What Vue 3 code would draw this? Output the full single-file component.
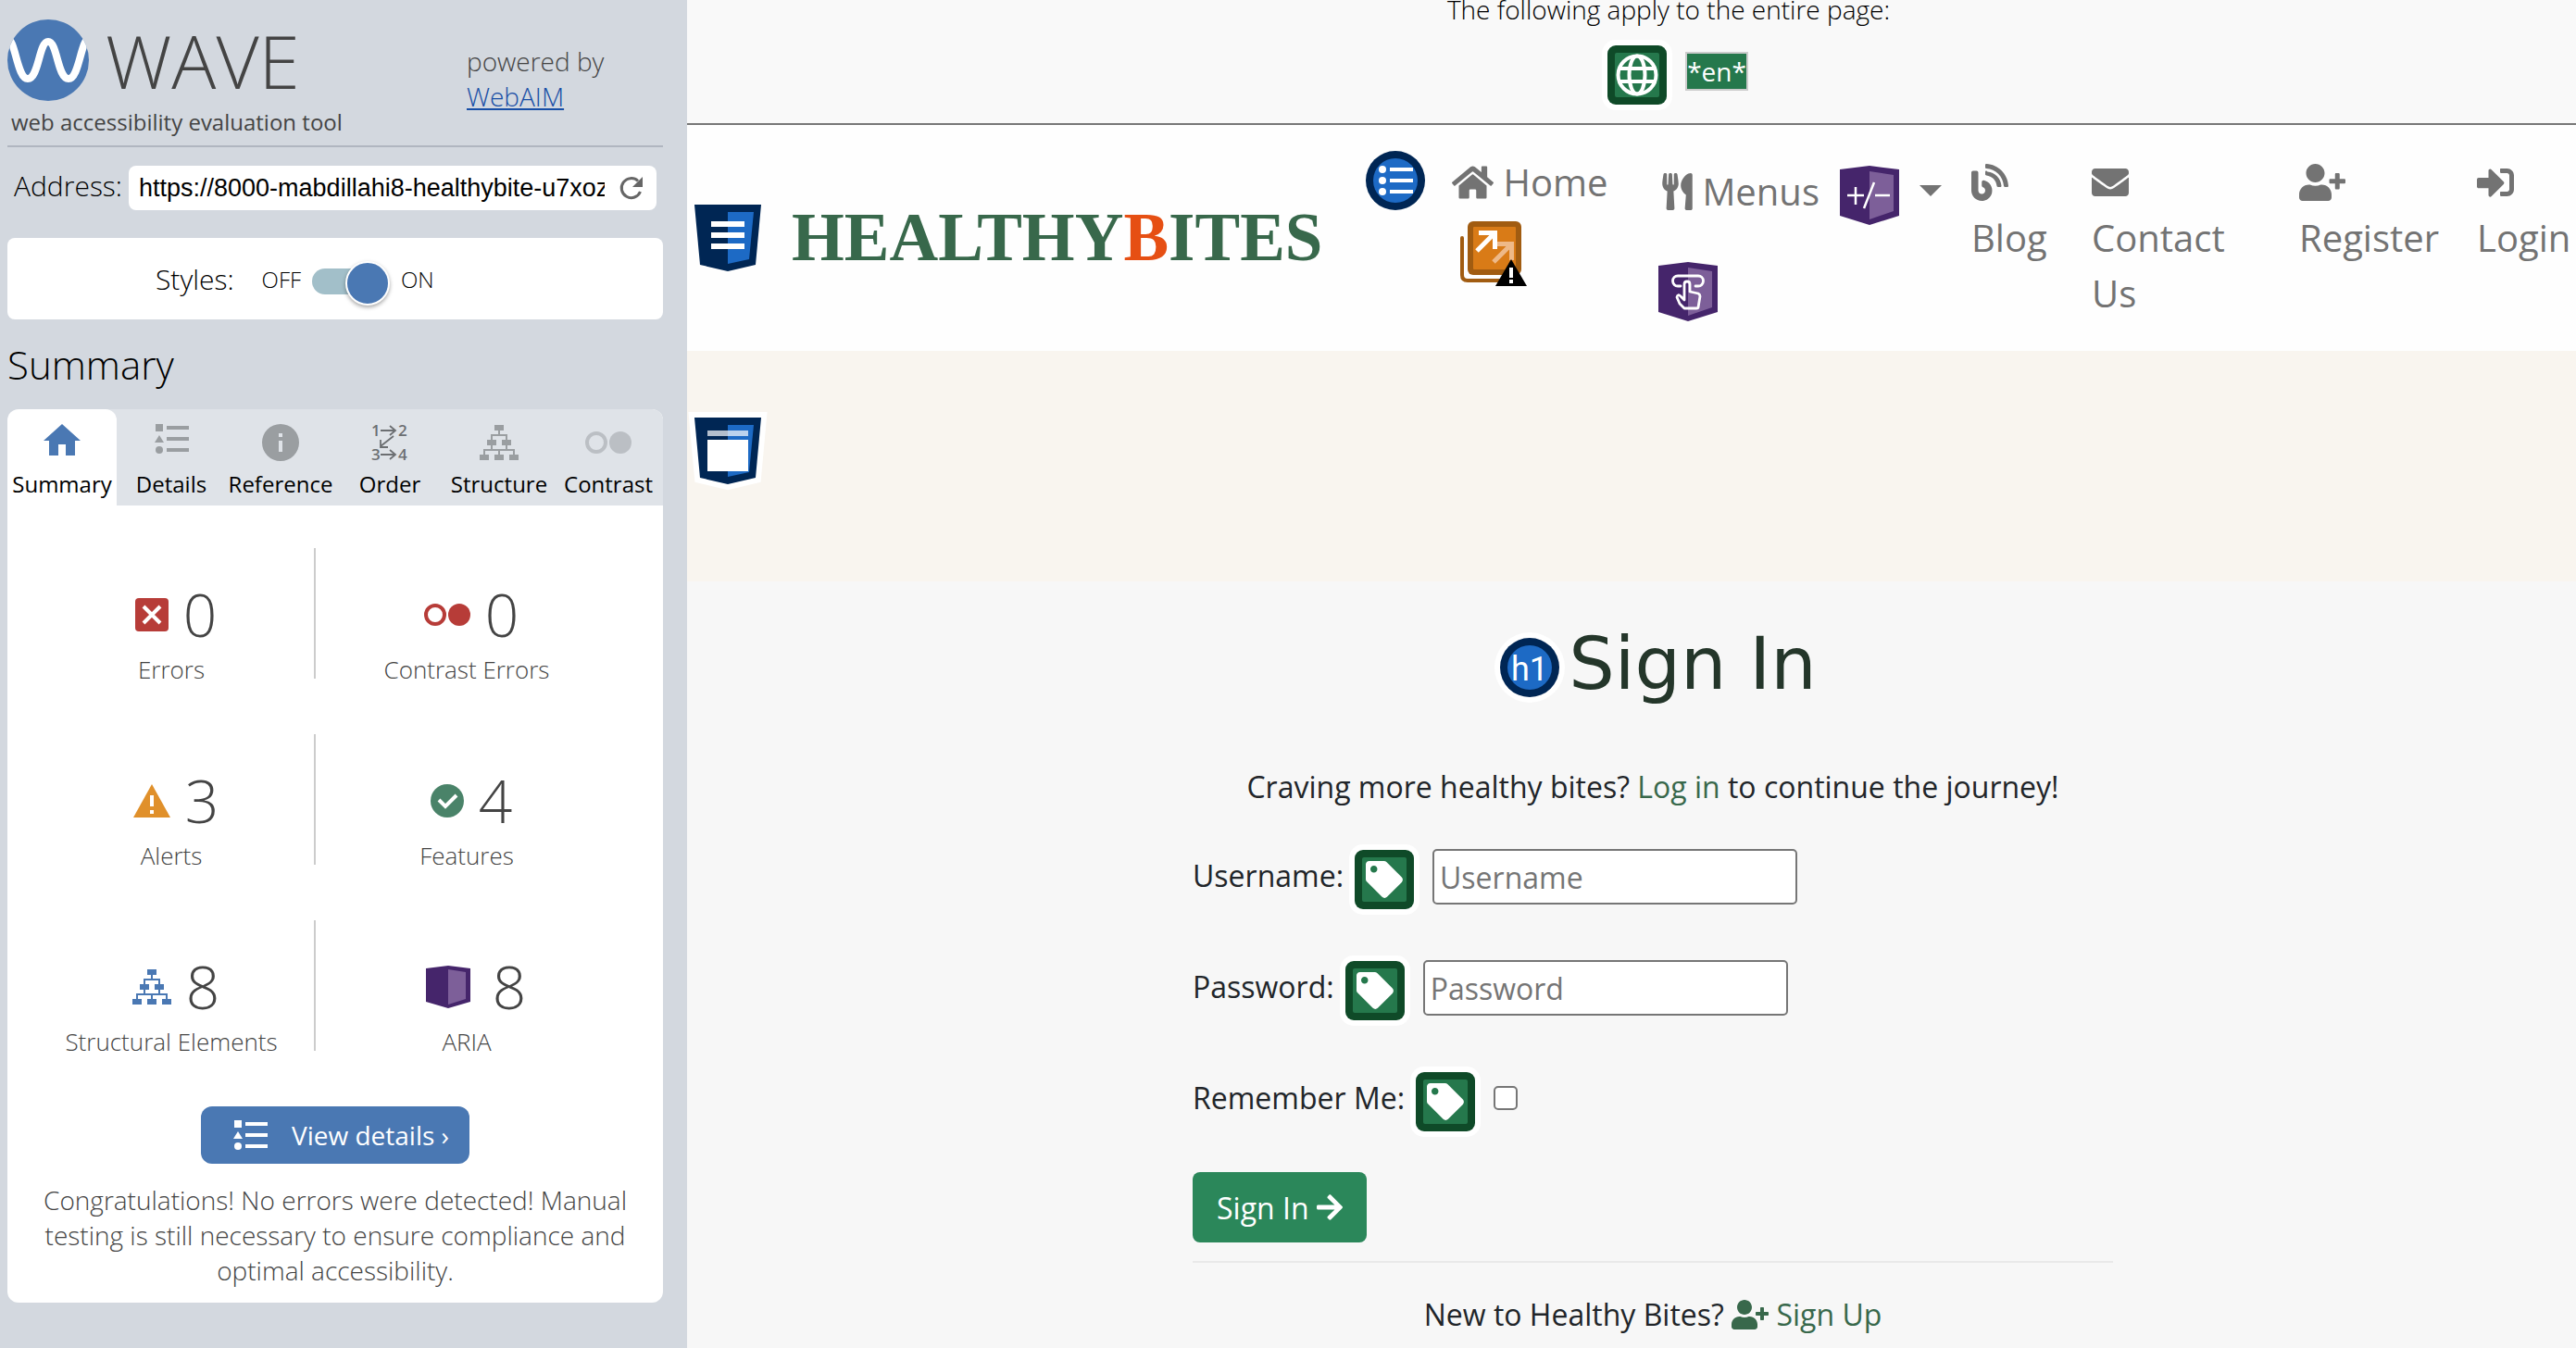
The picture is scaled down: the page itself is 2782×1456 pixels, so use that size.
<script setup>
import { ref } from 'vue'

const address = ref('https://8000-mabdillahi8-healthybite-u7xozu3kq1p.ws-eu110.gitpod.io')
const stylesOn = ref(true)
const username = ref('')
const password = ref('')
const remember = ref(false)

const tabs = [
  { icon: 'home', label: 'Summary' },
  { icon: 'list', label: 'Details' },
  { icon: 'info', label: 'Reference' },
  { icon: 'order', label: 'Order' },
  { icon: 'tree', label: 'Structure' },
  { icon: 'contrast', label: 'Contrast' },
]
const active = ref('Summary')

const statRows = [
  [
    { icon: 'error', w: 36, h: 36, count: 0, label: 'Errors', tone: 'red' },
    { icon: 'contrast', w: 50, h: 24, count: 0, label: 'Contrast Errors', tone: 'red' },
  ],
  [
    { icon: 'alert', w: 40, h: 36, count: 3, label: 'Alerts', tone: 'orange' },
    { icon: 'feature', w: 36, h: 36, count: 4, label: 'Features', tone: 'green' },
  ],
  [
    { icon: 'tree', w: 42, h: 38, count: 8, label: 'Structural Elements', tone: 'blue' },
    { icon: 'aria', w: 48, h: 46, count: 8, label: 'ARIA', tone: 'purple' },
  ],
]
</script>

<template>
  <svg class="sprite" aria-hidden="true">
    <defs>
      <symbol id="home" viewBox="0 0 40 40"><path d="M20 0 0 18h6v16h10V22h8v12h10V18h6z" /></symbol>
      <symbol id="list" viewBox="0 0 37 32">
        <path d="M1 0h8v8H1zM5 12l5 8H0zM13 2h24v4H13zM13 14h24v4H13zM13 26h24v4H13z" />
        <circle cx="5" cy="28" r="4" />
      </symbol>
      <symbol id="info" viewBox="0 0 40 40">
        <path fill-rule="evenodd" d="M20 0a20 20 0 1 1 0 40 20 20 0 0 1 0-40zM18 10v4h4v-4zM18 18v12h4V18z" />
      </symbol>
      <symbol id="order" viewBox="0 0 38 40">
        <g fill="none" stroke="#6c6f72" stroke-width="1.8">
          <path d="M9 7h15M19 2l6 5-6 5M9 33h15M19 28l6 5-6 5M23 13 9 24M9 17v8h8" />
        </g>
        <g font-family="'Open Sans', sans-serif" font-size="17" font-weight="600" fill="#6c6f72">
          <text x="-1" y="13">1</text><text x="28" y="13">2</text>
          <text x="-1" y="39">3</text><text x="28" y="39">4</text>
        </g>
      </symbol>
      <symbol id="tree" viewBox="0 0 42 38">
        <path d="M16 0h10v6H16zM8 16h10v6H8zM24 16h10v6H24zM0 32h10v6H0zM16 32h10v6H16zM32 32h10v6H32z" />
        <path fill="none" stroke="currentColor" stroke-width="2" d="M21 6v5M13 16v-5h16v5M13 22v5M29 22v5M5 32v-5h32v5M21 27v5" />
      </symbol>
      <symbol id="contrast" viewBox="0 0 50 24">
        <circle cx="12" cy="12" r="10" fill="none" stroke="currentColor" stroke-width="4" />
        <circle cx="38" cy="12" r="12" />
      </symbol>
      <symbol id="error" viewBox="0 0 36 36">
        <rect width="36" height="36" rx="4" />
        <path fill="none" stroke="#fff" stroke-width="4" d="m9 9 18 18M27 9 9 27" />
      </symbol>
      <symbol id="alert" viewBox="0 0 40 36">
        <path d="M20 0 40 36H0z" />
        <path fill="#fff" d="M18 12h4v12h-4zM18 28h4v4h-4z" />
      </symbol>
      <symbol id="feature" viewBox="0 0 36 36">
        <circle cx="18" cy="18" r="18" />
        <path fill="none" stroke="#fff" stroke-width="4" d="m9 17 7 7 12-12" />
      </symbol>
      <symbol id="aria" viewBox="0 0 48 46">
        <path d="M0 3 24 0l24 3v36l-24 7-24-7z" />
        <path fill="#7d5f99" d="m24 4 19 3v29l-19 6z" />
      </symbol>
      <symbol id="user-plus" viewBox="0 0 640 512">
        <path d="M624 208h-64v-64c0-8.8-7.2-16-16-16h-32c-8.8 0-16 7.2-16 16v64h-64c-8.8 0-16 7.2-16 16v32c0 8.8 7.2 16 16 16h64v64c0 8.8 7.2 16 16 16h32c8.8 0 16-7.2 16-16v-64h64c8.8 0 16-7.2 16-16v-32c0-8.8-7.2-16-16-16zm-400 48c70.7 0 128-57.3 128-128S294.7 0 224 0 96 57.3 96 128s57.3 128 128 128zm89.6 32h-16.7c-22.2 10.2-46.9 16-72.9 16s-50.6-5.8-72.9-16h-16.7C60.2 288 0 348.2 0 422.4V464c0 26.5 21.5 48 48 48h352c26.5 0 48-21.5 48-48v-41.6c0-74.2-60.2-134.4-134.4-134.4z" />
      </symbol>
      <symbol id="label-tag" viewBox="-6 -6 76 76">
        <rect x="-6" y="-6" width="76" height="76" rx="15" fill="#fff" />
        <rect width="64" height="64" rx="9" fill="#0f4a28" />
        <rect x="8" y="8" width="48" height="48" rx="2" fill="#25784c" />
        <path fill="#fff" transform="translate(12 12) scale(.078)" d="M0 252.118V48C0 21.49 21.49 0 48 0h204.118a48 48 0 0 1 33.941 14.059l211.882 211.882c18.745 18.745 18.745 49.137 0 67.882L293.823 497.941c-18.745 18.745-49.137 18.745-67.882 0L14.059 286.059A48 48 0 0 1 0 252.118zM112 64c-26.51 0-48 21.49-48 48s21.49 48 48 48 48-21.49 48-48-21.49-48-48-48z" />
      </symbol>
    </defs>
  </svg>

  <div class="app">
    <aside class="sidebar">
      <header class="wave">
        <div class="wave-brand">
          <div class="wave-logo">
            <svg width="88" height="88" viewBox="0 0 88 88" aria-hidden="true">
              <defs><clipPath id="disc"><circle cx="44" cy="44" r="44" /></clipPath></defs>
              <circle cx="44" cy="44" r="44" fill="#4a78b3" />
              <path clip-path="url(#disc)" fill="none" stroke="#fff" stroke-width="8" d="M-1 20C9 20 10 64 22 64S34 24 44 24s10 40 22 40 13-44 23-44" />
            </svg>
            <span class="wave-name">WAVE</span>
          </div>
          <p class="wave-tag">web accessibility evaluation tool</p>
        </div>
        <p class="powered">powered by<br /><a href="#webaim">WebAIM</a></p>
      </header>

      <form class="address" @submit.prevent>
        <label for="url">Address:</label>
        <div class="address-box">
          <input id="url" v-model="address" type="text" />
          <button type="submit" aria-label="Reload">
            <svg width="25" height="25" viewBox="0 0 25 25" aria-hidden="true">
              <path fill="none" stroke="#666" stroke-width="3" d="M20 4.500A10.500 10.500 0 1 0 22.500 16" />
              <path fill="#666" d="M25 0v11H14z" />
            </svg>
          </button>
        </div>
      </form>

      <div class="styles-box">
        <label for="styles-toggle" class="styles-label">Styles:</label>
        <span class="state">OFF</span>
        <input id="styles-toggle" v-model="stylesOn" type="checkbox" role="switch" class="toggle" />
        <span class="state">ON</span>
      </div>

      <h2 class="side-title">Summary</h2>

      <div class="panel">
        <nav class="tabs">
          <button v-for="t in tabs" :key="t.label" type="button" class="tab" :class="[{ active: active === t.label }, 'tab-' + t.icon]" @click="active = t.label">
            <svg aria-hidden="true"><use :href="'#' + t.icon" /></svg>
            <span>{{ t.label }}</span>
          </button>
        </nav>

        <div class="panel-body">
          <div v-for="(row, i) in statRows" :key="i" class="stat-row">
            <template v-for="(s, j) in row" :key="s.label">
              <div v-if="j" class="divider"></div>
              <div class="stat">
                <div class="stat-top" :class="s.tone">
                  <svg :width="s.w" :height="s.h" aria-hidden="true"><use :href="'#' + s.icon" /></svg>
                  <span class="count">{{ s.count }}</span>
                </div>
                <div class="stat-label">{{ s.label }}</div>
              </div>
            </template>
          </div>
          <div class="panel-foot">
            <button type="button" class="details">
              <svg width="37" height="32" aria-hidden="true"><use href="#list" /></svg>
              View details ›
            </button>
            <p class="congrats">Congratulations! No errors were detected! Manual testing is still necessary to ensure compliance and optimal accessibility.</p>
          </div>
        </div>
      </div>
    </aside>

    <main class="page">
      <section class="page-wide">
        <p>The following apply to the entire page:</p>
        <div class="page-icons">
          <svg class="globe" width="76" height="76" viewBox="-6 -6 76 76" aria-label="Language">
            <rect x="-6" y="-6" width="76" height="76" rx="15" fill="#fff" />
            <rect width="64" height="64" rx="9" fill="#0f4a28" />
            <rect x="8" y="8" width="48" height="48" rx="2" fill="#25784c" />
            <g fill="none" stroke="#fff" stroke-width="4">
              <circle cx="32" cy="32" r="20.500" />
              <ellipse cx="32" cy="32" rx="8.500" ry="20.500" />
              <path d="M13 25h38M13 39h38" />
            </g>
          </svg>
          <span class="lang">*en*</span>
        </div>
      </section>

      <nav class="navbar">
        <div class="brand">
          <svg width="72" height="72" viewBox="0 0 72 72" aria-hidden="true">
            <path fill="#002654" d="M0 0h72l-6 65-30 7-30-7z" />
            <path fill="#1d6ac5" d="M36 8h28l-5 51-23 5z" />
            <path fill="#fff" d="M18 18h36v6H18zM18 30h36v6H18zM18 42h36v6H18z" />
          </svg>
          <a href="#home" class="brand-name">HEALTHY<span>B</span>ITES</a>
        </div>
        <ul class="nav-list">
          <li class="list-flag">
            <svg width="64" height="64" viewBox="0 0 64 64" aria-hidden="true">
              <circle cx="32" cy="32" r="32" fill="#002654" />
              <circle cx="32" cy="32" r="24" fill="#1d6ac5" />
              <g fill="#fff">
                <circle cx="18" cy="20" r="4" /><circle cx="18" cy="32" r="4" /><circle cx="18" cy="44" r="4" />
                <path d="M26 18h25v4H26zM26 30h25v4H26zM26 42h25v4H26z" />
              </g>
            </svg>
          </li>
          <li>
            <a href="#home">
              <svg class="inline" width="45" height="40" viewBox="0 0 576 512" aria-hidden="true"><path d="M280.370 148.260L96 300.110V464a16 16 0 0 0 16 16l112.060-.29a16 16 0 0 0 15.920-16V368a16 16 0 0 1 16-16h64a16 16 0 0 1 16 16v95.640a16 16 0 0 0 16 16.050L464 480a16 16 0 0 0 16-16V300L295.670 148.260a12.190 12.190 0 0 0-15.300 0zM571.600 251.470L488 182.560V44.050a12 12 0 0 0-12-12h-56a12 12 0 0 0-12 12v72.610L318.470 43a48 48 0 0 0-61 0L4.340 251.470a12 12 0 0 0-1.600 16.900l25.500 31A12 12 0 0 0 45.150 301l235.220-193.740a12.190 12.190 0 0 1 15.300 0L530.900 301a12 12 0 0 0 16.900-1.600l25.500-31a12 12 0 0 0-1.700-16.930z" /></svg>
              Home
            </a>
            <svg class="redundant" width="72" height="70" viewBox="0 0 72 70" aria-hidden="true">
              <path fill="none" stroke="#a15c11" stroke-width="4" stroke-linecap="round" d="M2 18v40q0 6 6 6h50" />
              <rect x="8" width="58" height="58" rx="6" fill="#a15c11" />
              <rect x="14" y="6" width="46" height="46" rx="1" fill="#d97b17" />
              <path fill="none" stroke="#eeb988" stroke-width="5" d="m36 44 20-20M39 24.500h16.500V42" />
              <path fill="none" stroke="#fff" stroke-width="5" d="m18 32 20-20M20 12.500h17.500V30" />
              <path fill="#000" d="M55 41 72 70H38z" />
              <path fill="#fff" d="M53 50h4v11h-4zM53 63h4v4h-4z" />
            </svg>
          </li>
          <li class="menus">
            <div class="menus-row">
              <a href="#menus">
                <svg class="inline" width="33" height="40" viewBox="0 0 416 512" aria-hidden="true"><path d="M207.900 15.200c.8 4.700 16.100 94.500 16.100 128.800 0 52.300-27.800 89.600-68.900 104.600L168 486.700c.7 13.700-10.200 25.300-24 25.300H80c-13.700 0-24.700-11.500-24-25.300l12.900-238.100C27.700 233.600 0 196.200 0 144 0 109.600 15.300 19.900 16.100 15.200 19.300-5.100 61.400-5.400 64 16.300v141.200c1.300 3.400 15.100 3.200 16 0 1.400-25.300 7.900-139.200 8-141.800 3.300-20.800 44.700-20.800 47.900 0 .2 2.700 6.600 116.500 8 141.800.9 3.200 14.800 3.400 16 0V16.300c2.600-21.600 44.800-21.400 48-1.100zm119.200 285.700l-15 185.100c-1.200 14 9.900 26 23.900 26h56c13.300 0 24-10.700 24-24V24c0-13.200-10.700-24-24-24-82.500 0-221.400 178.500-64.900 300.900z" /></svg>
                Menus
              </a>
              <svg class="expand" width="64" height="64" viewBox="0 0 64 64" aria-hidden="true">
                <path fill="#45256b" d="m0 4 32-4 32 4v50L32 64 0 54z" />
                <path fill="#7d5f99" d="m32 6 26 4v39l-26 9z" />
                <path fill="none" stroke="#fff" stroke-width="2.500" d="M8 32h18M17 23v19M38 32h16" />
                <path fill="none" stroke="#fff" stroke-width="2.500" d="M37 18 26 46" />
              </svg>
              <svg class="caret" width="24" height="12" viewBox="0 0 24 12" aria-hidden="true"><path d="M0 0h24L12 12z" /></svg>
            </div>
            <svg class="popup" width="64" height="64" viewBox="0 0 64 64" aria-hidden="true">
              <path fill="#45256b" d="m0 4 32-4 32 4v50L32 64 0 54z" />
              <path fill="#7d5f99" d="m32 6 26 4v39l-26 9z" />
              <g fill="none" stroke="#fff" stroke-width="2.800" stroke-linecap="round" stroke-linejoin="round">
                <path d="M24 26h-3a5.500 5.500 0 0 1 0-11h22a5.500 5.500 0 0 1 0 11h-3" />
                <path d="M28 41V24c0-4 6-4 6 0v8l9 2q2 1 2 3l-2 12q0 1-2 1H28l-5-5-3-7q1-4 4-1z" />
              </g>
            </svg>
          </li>
          <li class="stacked">
            <a href="#blog">
              <svg width="40" height="40" viewBox="0 0 512 512" aria-hidden="true"><path d="M172.200 226.800c-14.600-2.900-28.200 8.900-28.200 23.800V301c0 10.200 7.100 18.400 16.700 22 18.200 6.800 31.300 24.400 31.300 45 0 26.500-21.500 48-48 48s-48-21.500-48-48V120c0-13.300-10.700-24-24-24H24c-13.300 0-24 10.700-24 24v248c0 89.500 82.100 160.200 175 140.700 54.400-11.400 98.300-55.400 109.700-109.700 17.400-82.900-37-157.200-112.500-172.200zM209 0c-9.200-.5-17 6.800-17 16v31.600c0 8.500 6.600 15.500 15 15.900 129.400 7 233.400 112 240.900 241.500.5 8.400 7.500 15 15.900 15h32.100c9.200 0 16.500-7.800 16-17C503.400 139.800 372.200 8.600 209 0zm.3 96c-9.300-.7-17.300 6.700-17.300 16.100v32.100c0 8.400 6.500 15.300 14.800 15.900 76.800 6.300 138 68.200 144.900 145.200.8 8.300 7.600 14.700 15.900 14.700h32.200c9.300 0 16.800-8 16.100-17.300-8.400-102.500-90.100-184.100-192.600-192.700z" /></svg>
              Blog
            </a>
          </li>
          <li class="stacked narrow">
            <a href="#contact">
              <svg width="40" height="40" viewBox="0 0 512 512" aria-hidden="true"><path d="M502.300 190.800c3.900-3.100 9.700-.2 9.700 4.700V400c0 26.500-21.500 48-48 48H48c-26.500 0-48-21.500-48-48V195.600c0-5 5.700-7.800 9.700-4.700 22.400 17.400 52.100 39.500 154.100 113.600 21.100 15.400 56.700 47.800 92.200 47.600 35.700.3 72-32.800 92.300-47.600 102-74.100 131.600-96.300 154-113.700zM256 320c23.200.4 56.600-29.200 73.400-41.400 132.700-96.300 142.800-104.700 173.400-128.700 5.800-4.500 9.200-11.500 9.200-18.900v-19c0-26.500-21.500-48-48-48H48c-26.500 0-48 21.500-48 48v19c0 7.400 3.400 14.300 9.200 18.900 30.600 23.900 40.700 32.400 173.400 128.700 16.800 12.200 50.200 41.800 73.400 41.400z" /></svg>
              Contact Us
            </a>
          </li>
          <li class="stacked">
            <a href="#register">
              <svg width="50" height="40" aria-hidden="true"><use href="#user-plus" /></svg>
              Register
            </a>
          </li>
          <li class="stacked">
            <a href="#login">
              <svg width="40" height="40" viewBox="0 0 512 512" aria-hidden="true"><path d="M416 448h-84c-6.600 0-12-5.400-12-12v-40c0-6.600 5.400-12 12-12h84c17.700 0 32-14.300 32-32V160c0-17.700-14.300-32-32-32h-84c-6.600 0-12-5.400-12-12V76c0-6.600 5.400-12 12-12h84c53 0 96 43 96 96v192c0 53-43 96-96 96zm-47-201L201 79c-15-15-41-4.500-41 17v96H24c-13.300 0-24 10.700-24 24v96c0 13.300 10.700 24 24 24h136v96c0 21.500 26 32 41 17l168-168c9.300-9.400 9.300-24.600 0-34z" /></svg>
              Login
            </a>
          </li>
        </ul>
      </nav>

      <div class="banner">
        <svg width="72" height="72" viewBox="0 0 72 72" aria-hidden="true">
          <path fill="#fff" stroke="#fff" stroke-width="12" d="M0 0h72l-6 65-30 7-30-7z" />
          <path fill="#002654" d="M0 0h72l-6 65-30 7-30-7z" />
          <path fill="#1d6ac5" d="M36 8h28l-5 51-23 5z" />
          <path fill="#fff" opacity=".7" d="M14 14h44v6H14z" />
          <path fill="#fff" d="M14 24h44v34H14z" />
        </svg>
      </div>

      <section class="signin">
        <div class="title">
          <svg width="64" height="64" viewBox="0 0 64 64" aria-hidden="true">
            <circle cx="32" cy="32" r="38" fill="#fff" />
            <circle cx="32" cy="32" r="32" fill="#002654" />
            <circle cx="32" cy="32" r="24" fill="#1d6ac5" />
            <text x="32" y="46" text-anchor="middle" fill="#fff" font-family="Roboto, sans-serif" font-size="36" font-weight="400">h1</text>
          </svg>
          <h1>Sign In</h1>
        </div>
        <p class="lead">Craving more healthy bites? <a href="#login">Log in</a> to continue the journey!</p>
        <form @submit.prevent>
          <div class="field">
            <label for="user">Username:</label>
            <svg class="tag" width="76" height="76" aria-hidden="true"><use href="#label-tag" /></svg>
            <input id="user" v-model="username" type="text" placeholder="Username" />
          </div>
          <div class="field">
            <label for="pass">Password:</label>
            <svg class="tag" width="76" height="76" aria-hidden="true"><use href="#label-tag" /></svg>
            <input id="pass" v-model="password" type="password" placeholder="Password" />
          </div>
          <div class="field">
            <label for="remember">Remember Me:</label>
            <svg class="tag" width="76" height="76" aria-hidden="true"><use href="#label-tag" /></svg>
            <input id="remember" v-model="remember" type="checkbox" />
          </div>
          <button type="submit" class="submit">
            Sign In
            <svg width="28" height="32" viewBox="0 0 448 512" aria-hidden="true"><path d="M190.500 66.900l22.200-22.200c9.400-9.400 24.600-9.400 33.900 0L441 239c9.400 9.400 9.400 24.600 0 33.900L246.600 467.300c-9.400 9.400-24.600 9.400-33.900 0l-22.200-22.200c-9.500-9.500-9.300-25 .4-34.300L311.400 296H24c-13.300 0-24-10.700-24-24v-32c0-13.300 10.700-24 24-24h287.400L190.900 101.200c-9.800-9.300-10-24.800-.4-34.300z" /></svg>
          </button>
        </form>
        <hr />
        <p class="signup">
          New to Healthy Bites?
          <a href="#signup"><svg width="40" height="32" aria-hidden="true"><use href="#user-plus" /></svg> Sign Up</a>
        </p>
      </section>
    </main>
  </div>
</template>

<style>
body {
  margin: 0;
}
</style>

<style scoped>
.sprite {
  position: absolute;
  width: 0;
  height: 0;
}
.app {
  display: flex;
  min-height: 100vh;
  font-family: 'Open Sans', 'Noto Sans', sans-serif;
  color: #212529;
}
.app *,
.app {
  box-sizing: border-box;
}
p,
h1,
h2,
ul {
  margin: 0;
  padding: 0;
}
svg {
  flex: none;
  fill: currentColor;
  overflow: visible;
}
button,
input {
  font-family: inherit;
}

/* Sidebar */
.sidebar {
  flex: 0 0 742px;
  padding: 21px 26px 0 8px;
  background: #d3d8df;
  font-weight: 300;
  color: #000;
}
.wave {
  display: flex;
  padding-bottom: 9px;
  border-bottom: 2px solid #b0b6c0;
  color: #444;
}
.wave-brand {
  flex: 0 0 496px;
}
.wave-logo {
  display: flex;
  align-items: center;
  gap: 18px;
  height: 88px;
}
.wave-name {
  font-size: 80px;
  line-height: 88px;
}
.wave-tag {
  margin-top: 7px;
  padding-left: 4px;
  font-size: 24px;
  line-height: 32px;
  font-weight: 400;
}
.powered {
  margin-top: 26px;
  font-size: 28px;
  line-height: 38px;
}
.powered a {
  color: #174ea6;
}
.address {
  display: flex;
  align-items: center;
  margin-top: 20px;
  padding-right: 7px;
}
.address label {
  flex: 0 0 131px;
  padding: 0 0 4px 7px;
  font-size: 30px;
  line-height: 38px;
}
.address-box {
  display: flex;
  flex: 1;
  height: 48px;
  border-radius: 8px;
  background: #fff;
}
.address-box input {
  flex: 1;
  min-width: 0;
  margin-left: 11px;
  padding: 0;
  border: 0;
  background: none;
  font: 27px 'Liberation Sans', Arial, sans-serif;
}
.address-box button {
  display: flex;
  align-items: center;
  justify-content: center;
  width: 56px;
  padding: 0;
  border: 0;
  background: none;
}
.styles-box {
  display: flex;
  align-items: center;
  height: 88px;
  margin-top: 30px;
  padding-left: 160px;
  border-radius: 8px;
  background: #fff;
}
.styles-label {
  margin-right: 30px;
  font-size: 30px;
}
.state {
  font-size: 24px;
}
.toggle {
  position: relative;
  width: 82px;
  height: 28px;
  margin: 5px 14px 0 12px;
  border-radius: 14px;
  background: #a2bfc9;
  appearance: none;
}
.toggle::after {
  content: '';
  position: absolute;
  top: -8px;
  right: -2px;
  width: 44px;
  height: 44px;
  border: 2px solid #fff;
  border-radius: 50%;
  background: #4a78b3;
  box-shadow: 0 2px 4px rgba(0, 0, 0, 0.35);
}
.side-title {
  margin: 21px 0 20px;
  font-size: 42px;
  line-height: 56px;
  font-weight: 300;
}
.panel {
  border-radius: 12px;
  background: #fff;
  overflow: hidden;
}
.tabs {
  display: grid;
  grid-template-columns: repeat(6, 1fr);
  background: #dfe3e8;
}
.tab {
  display: flex;
  flex-direction: column;
  align-items: center;
  gap: 9px;
  min-width: 0;
  padding: 16px 0 7px;
  border: 0;
  background: none;
  color: #000;
  font-size: 24px;
  line-height: 32px;
}
.tab svg {
  width: 42px;
  height: 40px;
  color: #9a9ea1;
}
.tab.active {
  border-radius: 12px 12px 0 0;
  background: #fff;
}
.tab.active svg {
  color: #4a78b3;
}
.tab-list svg {
  width: 37px;
  height: 32px;
  margin-bottom: 8px;
}
.tab-contrast svg {
  width: 50px;
  color: #bbbfc4;
}
.panel-body {
  display: flex;
  flex-direction: column;
  gap: 52px;
  padding-top: 46px;
}
.stat-row {
  display: grid;
  grid-template-columns: 308fr 2px 326fr;
  height: 149px;
  padding: 0 49px 0 23px;
}
.divider {
  height: 141px;
  background: #ccc;
}
.stat {
  padding-top: 36px;
  text-align: center;
}
.stat-top {
  display: flex;
  align-items: center;
  justify-content: center;
  gap: 16px;
  height: 72px;
  padding-left: 10px;
}
.count {
  color: #444;
  font-size: 64px;
  line-height: 72px;
}
.stat-label {
  margin-top: 5px;
  color: #444;
  font-size: 26px;
  line-height: 36px;
}
.red {
  color: #b73c38;
}
.orange {
  color: #e0902b;
}
.green {
  color: #4a8369;
}
.blue {
  color: #4a78b3;
}
.purple {
  gap: 24px;
  padding-left: 20px;
  color: #45256b;
}
.panel-foot {
  display: flex;
  flex-direction: column;
  align-items: center;
  gap: 20px;
}
.details {
  display: flex;
  align-items: center;
  gap: 26px;
  height: 62px;
  padding: 0 22px 0 35px;
  border: 0;
  border-radius: 12px;
  background: #4a78b3;
  color: #fff;
  font-size: 28px;
}
.congrats {
  padding: 0 32px 16px;
  color: #444;
  font-size: 28px;
  line-height: 38px;
  text-align: center;
}

/* Evaluated page */
.page {
  display: flex;
  flex: 1;
  flex-direction: column;
  min-width: 0;
  background: #f7f7f7;
}
.page-wide {
  padding: 0 0 14px 80px;
  border-bottom: 2px solid #777;
  background: #f9f9f9;
  color: #000;
  font-size: 28px;
  font-weight: 300;
  line-height: 20px;
  text-align: center;
}
.page-icons {
  display: flex;
  align-items: flex-start;
  justify-content: center;
  gap: 14px;
  margin-top: 23px;
  padding-left: 14px;
}
.lang {
  margin-top: 13px;
  border: 2px solid #ccc;
  background: #25784c;
  color: #fff;
  font-size: 28px;
  font-weight: 400;
  line-height: 38px;
}
.navbar {
  display: flex;
  min-height: 244px;
  padding-left: 8px;
  background: #fefefe;
}
.brand {
  display: flex;
  flex: 0 0 725px;
  align-items: center;
  gap: 33px;
}
.brand-name {
  color: #38684b;
  font: 700 73px/80px 'Liberation Serif', 'Times New Roman', serif;
  text-decoration: none;
}
.brand-name span {
  color: #e64f13;
}
.nav-list {
  display: grid;
  flex: 1;
  grid-template-columns: 93fr 223fr 338fr 130fr 224fr 192fr 107fr;
  padding-top: 32px;
  list-style: none;
  color: #737373;
  font-size: 40px;
  line-height: 60px;
}
.nav-list li {
  min-width: 0;
}
.nav-list a {
  display: block;
  color: inherit;
  text-decoration: none;
}
.nav-list svg {
  display: block;
}
.nav-list .inline {
  display: inline-block;
  vertical-align: -5px;
}
.nav-list .list-flag {
  margin-top: -4px;
}
.redundant {
  margin: 12px 0 0 9px;
}
.nav-list .menus {
  padding-top: 10px;
}
.menus-row {
  display: flex;
  height: 66px;
}
.menus-row a {
  padding-left: 4px;
}
.expand {
  margin: 2px 22px 0;
}
.caret {
  margin-top: 23px;
}
.popup {
  margin-top: 40px;
}
.stacked svg {
  margin: 10px 0;
}
.narrow {
  padding-right: 40px;
}
.banner {
  height: 249px;
  padding: 72px 8px;
  background: #f9f5ef;
}
.signin {
  width: 1040px;
  max-width: 100%;
  margin: 0 auto;
  padding: 44px 0 0 46px;
  font-size: 32px;
  line-height: 48px;
}
.title {
  display: flex;
  align-items: center;
  justify-content: center;
  gap: 10px;
  padding-left: 12px;
}
.title svg {
  margin-top: 8px;
}
.title h1 {
  color: #24362a;
  font: 400 78px/90px Verdana, 'DejaVu Sans', sans-serif;
}
.lead {
  margin: 64px 0 43px;
  text-align: center;
}
.signin a {
  color: #38684b;
  text-decoration: none;
}
.field {
  display: flex;
  align-items: flex-start;
  height: 60px;
  margin-bottom: 60px;
  line-height: 58px;
}
.field:last-of-type {
  margin-bottom: 49px;
}
.tag {
  margin: -5px 14px 0 6px;
}
.field input[type='text'],
.field input[type='password'] {
  width: 394px;
  height: 60px;
  padding: 0 6px;
  border: 2px solid #767676;
  border-radius: 5px;
  background: #fff;
  font-size: 32px;
}
.field input::placeholder {
  color: #757575;
}
.field input[type='checkbox'] {
  width: 26px;
  height: 26px;
  margin: 16px 0 0;
  border: 2px solid #767676;
  border-radius: 5px;
  background: #fff;
  appearance: none;
}
.submit {
  display: flex;
  align-items: center;
  gap: 8px;
  height: 76px;
  padding: 0 26px;
  border: 0;
  border-radius: 8px;
  background: #2b875a;
  color: #fff;
  font-size: 32px;
}
.signin hr {
  height: 2px;
  margin: 20px 0 32px;
  border: 0;
  background: #e9e9e9;
}
.signup {
  text-align: center;
}
.signup svg {
  vertical-align: -4px;
}
</style>
